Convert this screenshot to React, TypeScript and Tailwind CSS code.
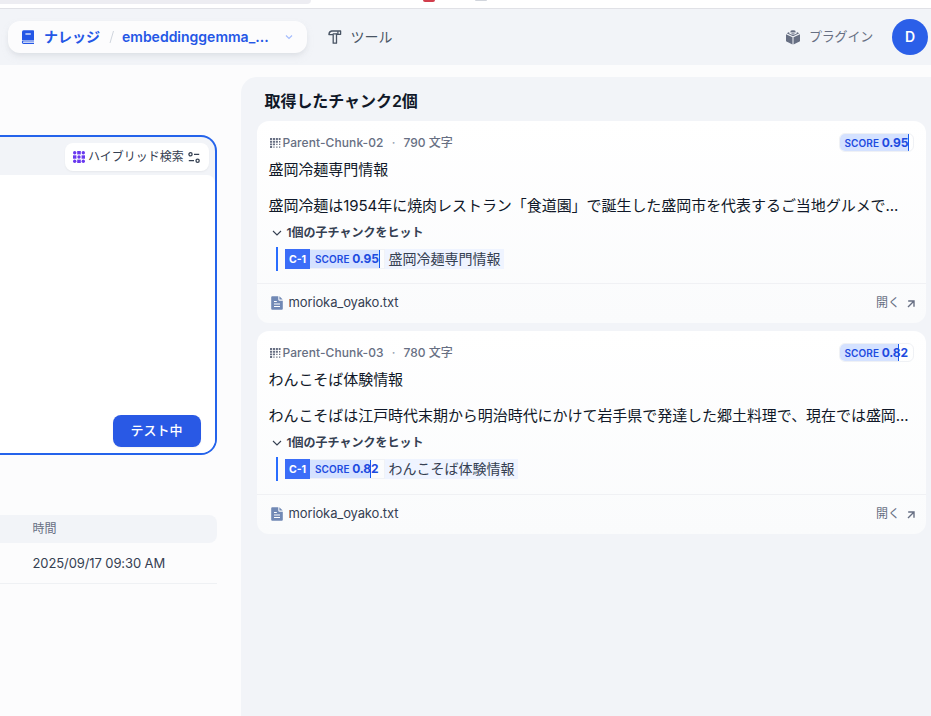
import { clsx } from "clsx";

const chunks = [
  {
    id: "Parent-Chunk-02",
    length: "790 文字",
    score: "0.95",
    title: "盛岡冷麺専門情報",
    content: "盛岡冷麺は1954年に焼肉レストラン「食道園」で誕生した盛岡市を代表するご当地グルメで...",
    child: "盛岡冷麺専門情報",
    file: "morioka_oyako.txt",
  },
  {
    id: "Parent-Chunk-03",
    length: "780 文字",
    score: "0.82",
    title: "わんこそば体験情報",
    content: "わんこそばは江戸時代末期から明治時代にかけて岩手県で発達した郷土料理で、現在では盛岡...",
    child: "わんこそば体験情報",
    file: "morioka_oyako.txt",
  },
];

const BookIcon = () => (
  <svg width="14" height="14" viewBox="0 0 14 14" className="shrink-0">
    <path d="M2.6 0.2H12.2Q13 0.2 13 1V10H2.8Q1.9 10 1 10.5V1.9Q1 0.2 2.6 0.2Z" fill="#2457e6" />
    <path d="M4.4 4H9.8" stroke="#fff" strokeWidth="1.2" />
    <path d="M13 11H2.6C1 11 1 13.4 2.6 13.4H13" fill="none" stroke="#2457e6" strokeWidth="1.1" />
  </svg>
);

const HammerIcon = () => (
  <svg width="14" height="14" viewBox="0 0 14 14" fill="none" stroke="#495464" strokeWidth="1.3" strokeLinejoin="round" className="shrink-0">
    <path d="M3.7 1H12.6V4.3H9.9L8.5 3.8V13.2H5.2V4.6H.9C1 2.8 1.9 1.3 3.7 1Z" />
    <path d="M5.2 4.6V3.9H8.5M9.9 1.2V4.2" />
  </svg>
);

const PluginIcon = () => (
  <svg width="14" height="15" viewBox="0 0 14 15" fill="#676f83" className="shrink-0">
    <path d="M0 4.3L6.5 7.2V14.4L.5 11.6Q0 11.3 0 10.8Z" />
    <path d="M14 4.3L7.5 7.2V14.4L13.5 11.6Q14 11.3 14 10.8Z" />
    <path d="M.7 3.3L3.2 2.1V3.3C4.4 4.9 9.6 4.9 10.8 3.3V2.1L13.3 3.3L7 6.2Z" />
    <ellipse cx="7" cy="1.4" rx="2.7" ry="1.1" />
    <path d="M4.1 2.2C4.5 4.1 9.5 4.1 9.9 2.2C8.8 3.2 5.2 3.2 4.1 2.2Z" />
  </svg>
);

const HybridIcon = () => (
  <svg width="12" height="12" viewBox="0 0 12 12" fill="#6938ef" className="shrink-0">
    <circle cx="1.7" cy="1.7" r="1.7" />
    <rect x="4.2" y="0" width="3.6" height="3.4" />
    <circle cx="10.3" cy="1.7" r="1.7" />
    <rect x="0" y="4.3" width="3.4" height="3.4" />
    <circle cx="6" cy="6" r="1.7" />
    <rect x="8.6" y="4.3" width="3.4" height="3.4" />
    <circle cx="1.7" cy="10.3" r="1.7" />
    <rect x="4.2" y="8.6" width="3.6" height="3.4" />
    <circle cx="10.3" cy="10.3" r="1.7" />
  </svg>
);

const EqualizerIcon = () => (
  <svg width="12" height="11" viewBox="0 0 12 11" fill="none" stroke="#354052" strokeWidth="1.3" className="shrink-0">
    <circle cx="2.5" cy="2.3" r="1.6" />
    <path d="M6 2.3H11.2M.8 8.7H6" />
    <circle cx="9.6" cy="8.7" r="1.6" />
  </svg>
);

const ChunkIcon = () => (
  <svg width="11" height="10" viewBox="0 0 11 10" fill="#676f83" className="shrink-0">
    <path d="M0 0H2.1V2H0ZM2.9 0H5V2H2.9ZM5.8 0H7.9V2H5.8ZM8.7 0H10.6V2H8.7Z" />
    <path d="M0 2.8H2.1V4.7H0ZM2.9 2.8H5V4.7H2.9ZM5.8 2.8H7.9V4.7H5.8ZM0 5.4H2.1V7.3H0ZM2.9 5.4H5V7.3H2.9ZM0 8.1H2.1V10H0Z" />
    <path d="M9 3H10.3V4.4H9ZM6.2 5.7H7.5V7H6.2ZM9 5.7H10.3V7H9ZM3.3 8.4H4.6V9.7H3.3ZM6.2 8.4H7.5V9.7H6.2ZM9 8.4H10.3V9.7H9Z" />
  </svg>
);

const FileIcon = () => (
  <svg width="12" height="14" viewBox="0 0 12 14" className="shrink-0">
    <path d="M1.2 .2H7.3V3.4Q7.3 4.7 8.6 4.7H11.8V12.8Q11.8 13.8 10.8 13.8H1.2Q.2 13.8 .2 12.8V1.2Q.2 .2 1.2 .2Z" fill="#7189b5" />
    <path d="M8.4 .3L11.7 3.6H8.4Z" fill="#7189b5" />
    <path d="M3 5.5H5.8M3 8H9M3 10.5H9" stroke="#fff" strokeWidth="1.1" />
  </svg>
);

function Score({ value, square = false }: { value: string; square?: boolean }) {
  return (
    <div
      className={clsx(
        "relative flex shrink-0 items-center overflow-hidden border pl-[5px] text-[#1d4be0]",
        square ? "h-5 w-[75px] border-l-0 border-[#f0f2f6]" : "h-[19px] w-[75px] rounded-md border-[#eff1f5]"
      )}
    >
      <div
        className="absolute inset-y-0 left-0 border-r border-[#155aef] bg-[#d5e2ff]"
        style={{ width: `${Number(value) * 100}%` }}
      />
      <span className="relative text-[10px] leading-4 font-semibold tracking-[0.1px]">SCORE</span>
      <span className="relative ml-[2.5px] text-[12px] leading-4 font-bold tracking-[-0.1px]">{value}</span>
    </div>
  );
}

function ChunkCard({ chunk }: { chunk: (typeof chunks)[number] }) {
  return (
    <div className="flex h-[202px] flex-col rounded-xl bg-gradient-to-b from-white to-[#fafbfc] last:h-[203px]">
      <div className="flex h-10 shrink-0 items-center justify-between pt-[3px] pr-[12.5px] pl-[13px]">
        <div className="flex items-center text-[12px] font-medium text-[#676f83]">
          <ChunkIcon />
          <span className="ml-[1.5px] w-[101px] whitespace-nowrap tracking-[0.08px]">{chunk.id}</span>
          <span className="w-5 text-center text-[#98a2b2]">·</span>
          <span className="whitespace-nowrap">{chunk.length}</span>
        </div>
        <Score value={chunk.score} />
      </div>
      <div className="shrink-0 px-[11.5px] text-[15px] text-[#101828]">
        <div className="h-9 leading-[17px] tracking-[-0.05px]">{chunk.title}</div>
        <div className="h-[26px] leading-[17px] tracking-[-0.05px] whitespace-nowrap">{chunk.content}</div>
      </div>
      <div className="flex h-[18px] shrink-0 items-center pt-px pl-[15px] text-[12px] font-semibold text-[#354052]">
        <svg width="10" height="10" viewBox="0 0 10 10" fill="none" stroke="currentColor" strokeWidth="1.1">
          <path d="M1 3L5 7L9 3" />
        </svg>
        <span className="ml-[4.5px] pt-px leading-4">1個の子チャンクをヒット</span>
      </div>
      <div className="mt-[6px] ml-[19px] flex h-6 shrink-0 items-center border-l-2 border-[#296dff] pl-[7px]">
        <span className="flex h-5 w-[25px] items-center justify-center bg-[#3b6df8] pt-px text-[10.5px] font-bold text-white">C-1</span>
        <Score value={chunk.score} square />
        <span className="flex h-5 items-center bg-[#eff4ff] pr-[3px] pb-px pl-[3.5px] text-[14px] whitespace-nowrap text-[#354052]">
          {chunk.child}
        </span>
      </div>
      <div className="mt-auto flex h-10 items-center border-t border-[#f0f1f4] pr-[11px] pb-px pl-[14px]">
        <FileIcon />
        <span className="ml-[5.5px] text-[13px] tracking-[-0.12px] text-[#354052]">{chunk.file}</span>
        <span className="ml-auto text-[12px] text-[#676f83]">開く</span>
        <svg width="8" height="8" viewBox="0 0 8 8" fill="none" stroke="#676f83" strokeWidth="1.4" className="mt-px ml-[7px]">
          <path d="M1.2 1H7V6.8M7 1L1 7" />
        </svg>
      </div>
    </div>
  );
}

function Header() {
  return (
    <header className="flex h-14 shrink-0 items-center bg-[#f2f4f8] pr-[3px] pl-2">
      <nav className="flex h-8 w-[299px] items-center rounded-xl bg-[#fcfcfd] pr-3 pl-[13px] text-[14px] font-semibold text-[#2457e6] shadow-md shadow-gray-300/50">
        <BookIcon />
        <span className="mb-[2px] ml-[9px] w-14 whitespace-nowrap">ナレッジ</span>
        <svg width="6" height="12" viewBox="0 0 6 12" stroke="#d0d5dd" className="ml-[9px]">
          <path d="M1 12L4.5 0" />
        </svg>
        <span className="mb-[2px] ml-[7px] whitespace-nowrap">embeddinggemma_...</span>
        <svg width="8" height="8" viewBox="0 0 8 8" fill="none" stroke="#a4bcfd" strokeWidth="1.2" className="mr-[2px] ml-auto">
          <path d="M1 2.5L4 5.5L7 2.5" />
        </svg>
      </nav>
      <div className="ml-[21px] flex items-center text-[14px] text-[#495464]">
        <HammerIcon />
        <span className="mb-[2px] ml-[8.5px]">ツール</span>
      </div>
      <div className="ml-auto flex items-center text-[13px] text-[#676f83]">
        <PluginIcon />
        <span className="ml-[9.5px] w-16 whitespace-nowrap tracking-[-0.2px]">プラグイン</span>
      </div>
      <div className="ml-[19px] flex size-9 items-center justify-center rounded-full bg-[#2b5fe8] pb-px text-[14px] font-semibold text-white">D</div>
    </header>
  );
}

function QueryPanel() {
  return (
    <section className="w-[241px] shrink-0 pt-[70px] pr-6">
      <div className="flex h-80 flex-col rounded-r-2xl border-y-2 border-r-2 border-[#2463eb] bg-[#f2f4f8]">
        <div className="flex h-[38px] shrink-0 items-center justify-end pr-[6px] pt-1">
          <div className="mb-[2px] flex h-7 w-36 items-center rounded-lg bg-white pl-2 text-[12px] text-[#354052] shadow-xs">
            <HybridIcon />
            <span className="ml-[3px] whitespace-nowrap">ハイブリッド検索</span>
            <span className="ml-[4px]">
              <EqualizerIcon />
            </span>
          </div>
        </div>
        <div className="flex flex-1 items-end justify-end rounded-tr-lg rounded-br-[14px] bg-white pr-[14px] pb-[6px]">
          <button className="h-8 w-[88px] rounded-lg bg-[#2959e5] pr-px text-[13px] font-medium text-white shadow-xs">テスト中</button>
        </div>
      </div>
      <div className="mt-[60px] flex h-7 items-center rounded-r-lg bg-[#f2f4f8] pl-[32.5px] text-[12px] text-[#676f83]">時間</div>
      <div className="flex h-[41px] items-center border-b border-[#eff1f4] pt-[2px] pl-[32.5px] text-[13px] tracking-[-0.1px] text-[#354052]">2025/09/17 09:30 AM</div>
    </section>
  );
}

export default function App() {
  return (
    <div className="flex h-[716px] w-[931px] flex-col overflow-hidden bg-[#fcfcfd] font-['Inter','Noto_Sans_CJK_JP',sans-serif]">
      {/* Browser toolbar edge */}
      <div className="flex h-[9px] shrink-0 items-start border-b border-[#e0e1e6] bg-white">
        <div className="h-1 w-[311px] rounded-br-lg bg-[#ededf2]" />
        <div className="ml-[112px] h-[2px] w-3 rounded-b-sm bg-[#d13d4c]" />
        <div className="ml-10 h-px w-3 rounded-b-full bg-gray-300" />
      </div>
      <Header />
      <main className="flex min-h-0 flex-1">
        <QueryPanel />
        <section className="mt-3 min-w-0 flex-1 rounded-tl-2xl bg-[#f2f4f8] pr-[5px] pl-4">
          <h1 className="h-11 pt-3 pl-[7.5px] text-[16px] leading-6 font-semibold tracking-[-0.05px] text-[#101828]">取得したチャンク2個</h1>
          <div className="flex flex-col gap-2">
            {chunks.map((chunk) => (
              <ChunkCard key={chunk.id} chunk={chunk} />
            ))}
          </div>
        </section>
      </main>
    </div>
  );
}
